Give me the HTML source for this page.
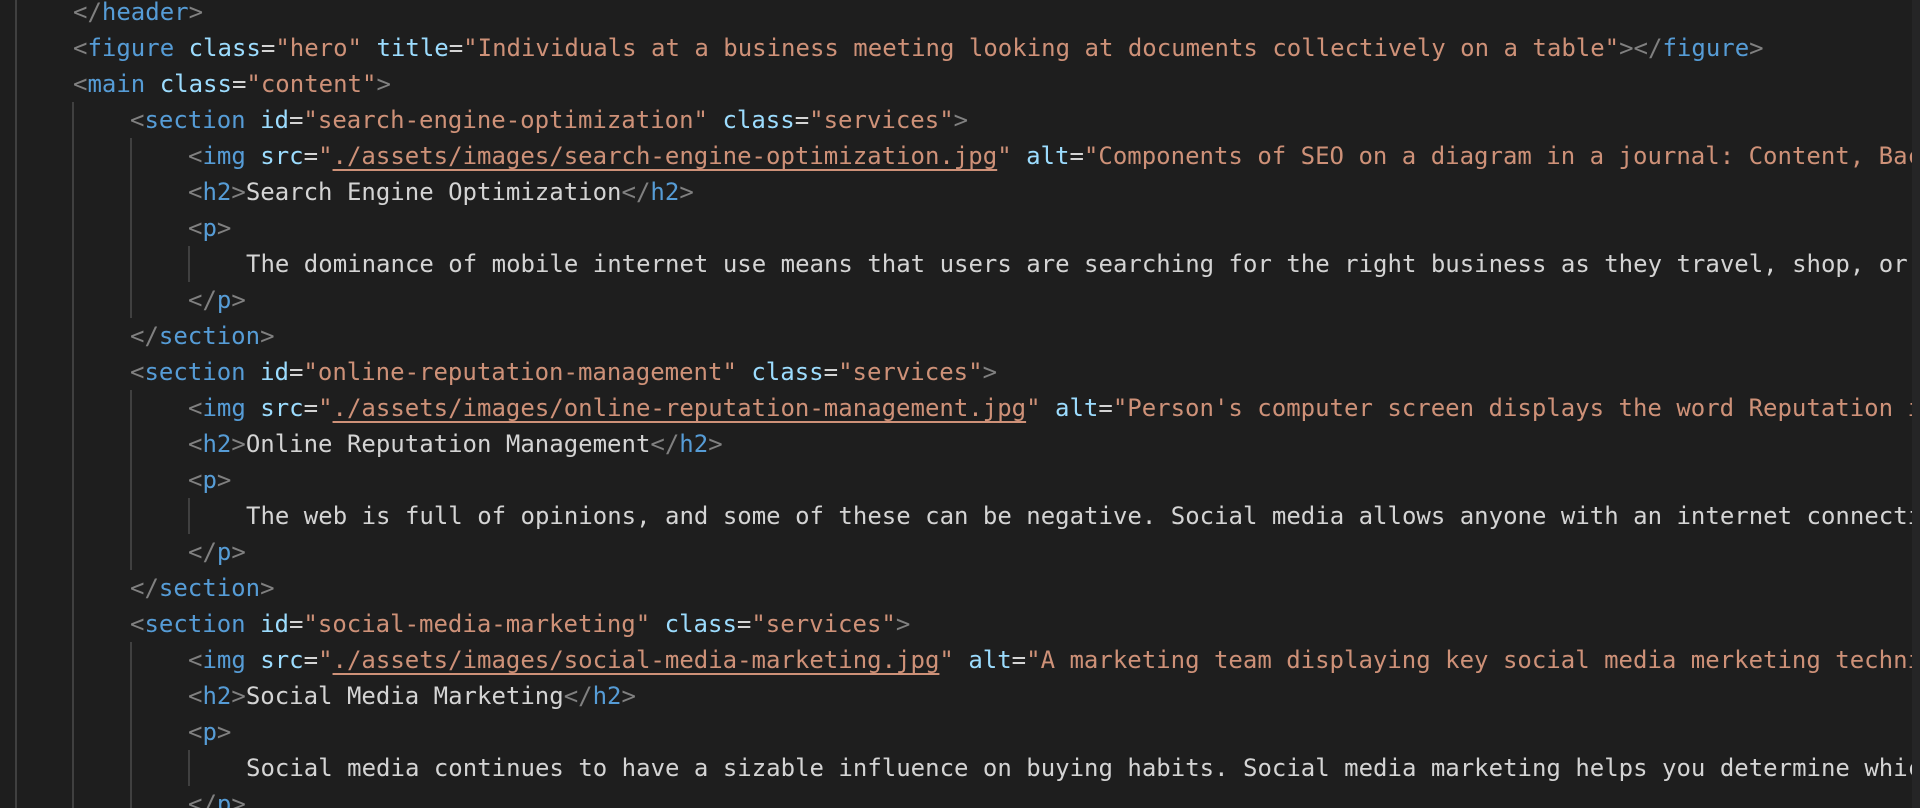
<!DOCTYPE html>
<html><head><meta charset="utf-8">
<style>
html,body{margin:0;padding:0;background:#1e1e1e;width:1920px;height:808px;overflow:hidden}
#ed{position:absolute;left:0;top:0;width:1912px;height:808px;overflow:hidden;font-family:"DejaVu Sans Mono","Liberation Mono",monospace;font-size:24px;color:#d4d4d4}
.l{position:absolute;height:36px;line-height:36px;white-space:pre}
.g{position:absolute;width:2px;background:#404040}
.b{color:#808080}.t{color:#569cd6}.a{color:#9cdcfe}.s{color:#ce9178}.u{text-decoration:underline;text-decoration-color:#ce9178;text-underline-offset:5px}
#sb{position:absolute;left:1912px;top:0;width:8px;height:808px;background:#252526}
</style></head><body>
<div id="ed">
<div class="g" style="left:15px;top:0;height:808px"></div>
<div class="g" style="left:72px;top:102px;height:706px"></div>
<div class="g" style="left:130px;top:138px;height:180px"></div>
<div class="g" style="left:130px;top:390px;height:180px"></div>
<div class="g" style="left:130px;top:642px;height:166px"></div>
<div class="g" style="left:188px;top:246px;height:36px"></div>
<div class="g" style="left:188px;top:498px;height:36px"></div>
<div class="g" style="left:188px;top:750px;height:36px"></div>

<div class="l" style="left:73px;top:-6px"><span class="b">&lt;/</span><span class="t">header</span><span class="b">&gt;</span></div>
<div class="l" style="left:73px;top:30px"><span class="b">&lt;</span><span class="t">figure</span> <span class="a">class</span>=<span class="s">"hero"</span> <span class="a">title</span>=<span class="s">"Individuals at a business meeting looking at documents collectively on a table"</span><span class="b">&gt;&lt;/</span><span class="t">figure</span><span class="b">&gt;</span></div>
<div class="l" style="left:73px;top:66px"><span class="b">&lt;</span><span class="t">main</span> <span class="a">class</span>=<span class="s">"content"</span><span class="b">&gt;</span></div>
<div class="l" style="left:130px;top:102px"><span class="b">&lt;</span><span class="t">section</span> <span class="a">id</span>=<span class="s">"search-engine-optimization"</span> <span class="a">class</span>=<span class="s">"services"</span><span class="b">&gt;</span></div>
<div class="l" style="left:188px;top:138px"><span class="b">&lt;</span><span class="t">img</span> <span class="a">src</span>=<span class="s">"<span class="u">./assets/images/search-engine-optimization.jpg</span>"</span> <span class="a">alt</span>=<span class="s">"Components of SEO on a diagram in a journal: Content, Backlinks, Keywords"</span></div>
<div class="l" style="left:188px;top:174px"><span class="b">&lt;</span><span class="t">h2</span><span class="b">&gt;</span>Search Engine Optimization<span class="b">&lt;/</span><span class="t">h2</span><span class="b">&gt;</span></div>
<div class="l" style="left:188px;top:210px"><span class="b">&lt;</span><span class="t">p</span><span class="b">&gt;</span></div>
<div class="l" style="left:246px;top:246px">The dominance of mobile internet use means that users are searching for the right business as they travel, shop, or relax</div>
<div class="l" style="left:188px;top:282px"><span class="b">&lt;/</span><span class="t">p</span><span class="b">&gt;</span></div>
<div class="l" style="left:130px;top:318px"><span class="b">&lt;/</span><span class="t">section</span><span class="b">&gt;</span></div>
<div class="l" style="left:130px;top:354px"><span class="b">&lt;</span><span class="t">section</span> <span class="a">id</span>=<span class="s">"online-reputation-management"</span> <span class="a">class</span>=<span class="s">"services"</span><span class="b">&gt;</span></div>
<div class="l" style="left:188px;top:390px"><span class="b">&lt;</span><span class="t">img</span> <span class="a">src</span>=<span class="s">"<span class="u">./assets/images/online-reputation-management.jpg</span>"</span> <span class="a">alt</span>=<span class="s">"Person's computer screen displays the word Reputation in a search bar"</span></div>
<div class="l" style="left:188px;top:426px"><span class="b">&lt;</span><span class="t">h2</span><span class="b">&gt;</span>Online Reputation Management<span class="b">&lt;/</span><span class="t">h2</span><span class="b">&gt;</span></div>
<div class="l" style="left:188px;top:462px"><span class="b">&lt;</span><span class="t">p</span><span class="b">&gt;</span></div>
<div class="l" style="left:246px;top:498px">The web is full of opinions, and some of these can be negative. Social media allows anyone with an internet connection to post</div>
<div class="l" style="left:188px;top:534px"><span class="b">&lt;/</span><span class="t">p</span><span class="b">&gt;</span></div>
<div class="l" style="left:130px;top:570px"><span class="b">&lt;/</span><span class="t">section</span><span class="b">&gt;</span></div>
<div class="l" style="left:130px;top:606px"><span class="b">&lt;</span><span class="t">section</span> <span class="a">id</span>=<span class="s">"social-media-marketing"</span> <span class="a">class</span>=<span class="s">"services"</span><span class="b">&gt;</span></div>
<div class="l" style="left:188px;top:642px"><span class="b">&lt;</span><span class="t">img</span> <span class="a">src</span>=<span class="s">"<span class="u">./assets/images/social-media-marketing.jpg</span>"</span> <span class="a">alt</span>=<span class="s">"A marketing team displaying key social media merketing techniques on a board"</span></div>
<div class="l" style="left:188px;top:678px"><span class="b">&lt;</span><span class="t">h2</span><span class="b">&gt;</span>Social Media Marketing<span class="b">&lt;/</span><span class="t">h2</span><span class="b">&gt;</span></div>
<div class="l" style="left:188px;top:714px"><span class="b">&lt;</span><span class="t">p</span><span class="b">&gt;</span></div>
<div class="l" style="left:246px;top:750px">Social media continues to have a sizable influence on buying habits. Social media marketing helps you determine which platforms</div>
<div class="l" style="left:188px;top:786px"><span class="b">&lt;/</span><span class="t">p</span><span class="b">&gt;</span></div>
</div>
<div id="sb"></div>
</body></html>
